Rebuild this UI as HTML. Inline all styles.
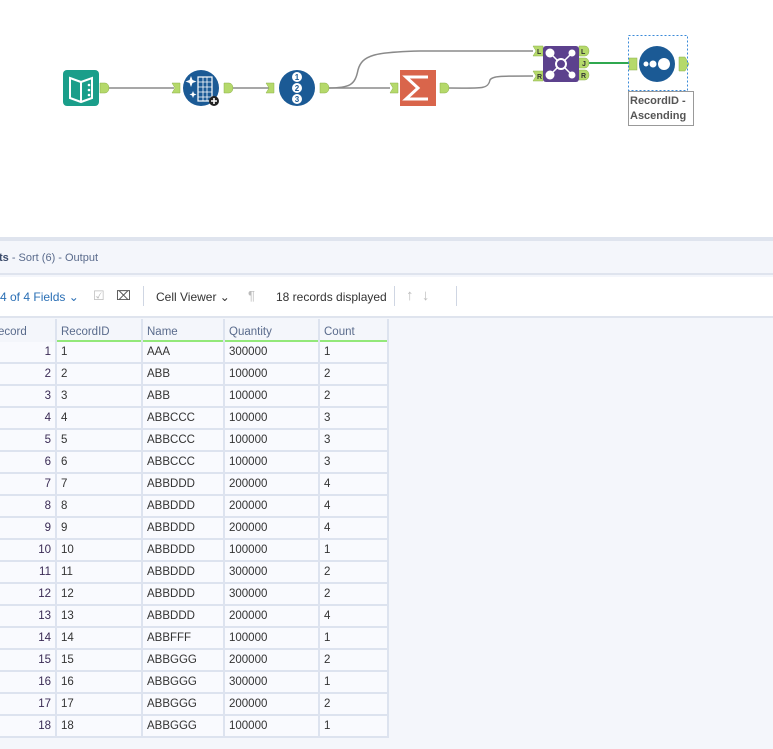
<!DOCTYPE html>
<html><head><meta charset="utf-8"><style>
*{margin:0;padding:0;box-sizing:border-box}
body{width:773px;height:749px;overflow:hidden;background:#f4f6fb;font-family:"Liberation Sans",sans-serif;position:relative}
#canvas{position:absolute;left:0;top:0;width:773px;height:237px;background:#fff}
#band{position:absolute;left:0;top:237px;width:773px;height:4px;background:#dfe4ee}
#hdr{position:absolute;left:0;top:241px;width:773px;height:34px;background:#f4f6fb;border-bottom:2px solid #dfe4ee;font-size:11px;color:#5a6b8c;line-height:34px}
#tb{position:absolute;left:0;top:277px;width:773px;height:41px;background:#fff;border-bottom:2px solid #dfe4ee;font-size:12px;color:#333}
#tb span{position:absolute;top:13px;white-space:nowrap}
.sep{position:absolute;top:9px;width:1px;height:20px;background:#cfd6e3}
table{position:absolute;left:-2px;top:319px;border-collapse:separate;border-spacing:0;table-layout:fixed;font-size:11.5px}
td{height:22px;border-right:2px solid #dde3ef;border-bottom:2px solid #dde3ef;background:#f9fafe;padding-left:4px;color:#333;white-space:nowrap;overflow:hidden}
tr.h td{color:#5a6b8c;background:#f4f6fb;border-bottom:none;height:21px;padding-top:4px}
tr.g td{height:2px;padding:0;border-bottom:none;background:#f4f6fb}
tr.g td.gg{background:#93e87a;border-bottom:none}
td.r{text-align:right;padding-right:4px;padding-left:0;color:#3a2b55}
tr.h td.r{text-align:left;padding-left:0}
</style></head><body>
<div id="canvas">
<svg width="773" height="237" xmlns="http://www.w3.org/2000/svg">
<g fill="none" stroke="#8a8a8a" stroke-width="1.5">
<line x1="108" y1="88" x2="174" y2="88"/>
<line x1="232" y1="88" x2="270" y2="88"/>
<line x1="328" y1="88" x2="390" y2="88"/>
<path d="M328 88 C350 88 355 85 358 70 C362 55 375 52 420 51 L533 51"/>
<path d="M448 88 C480 88 488 90 490 80 C492 76 500 76 533 76"/>
</g>
<line x1="589" y1="63" x2="629" y2="63" stroke="#2fa84f" stroke-width="2"/>
<g fill="#b5d96b" stroke="#8cb04a" stroke-width="0.5">
<path d="M100 83h5a4 5 0 0 1 0 10h-5z"/>
<path d="M172 83h8v10h-8l3-5z"/>
<path d="M224 83h5a4 5 0 0 1 0 10h-5z"/>
<path d="M266 83h8v10h-8l3-5z"/>
<path d="M320 83h5a4 5 0 0 1 0 10h-5z"/>
<path d="M390 83h8v10h-8l3-5z"/>
<path d="M440 83h5a4 5 0 0 1 0 10h-5z"/>
<path d="M533 46h10v10h-10l3-5z"/>
<path d="M533 71h10v10h-10l3-5z"/>
<path d="M579 46h6a4 5 0 0 1 0 10h-6z"/>
<path d="M579 58h6a4 5 0 0 1 0 10h-6z"/>
<path d="M579 70h6a4 5 0 0 1 0 10h-6z"/>
<rect x="629" y="58" width="8" height="12"/>
<path d="M679 57h6l4 7-4 7h-6z"/>
</g>
<g font-size="7" font-weight="bold" fill="#333" font-family="Liberation Sans">
<text x="537" y="54">L</text><text x="537" y="79">R</text>
<text x="581" y="54">L</text><text x="582" y="66">J</text><text x="581" y="78">R</text>
</g>
<rect x="63" y="70" width="36" height="36" rx="4" fill="#1a9e8a"/>
<path d="M70 78 L81 82 L92 78 V98 L81 102 L70 98Z" fill="none" stroke="#fff" stroke-width="2"/>
<line x1="81" y1="82" x2="81" y2="101" stroke="#fff" stroke-width="2"/>
<circle cx="89" cy="85" r="1.3" fill="#fff"/><circle cx="89" cy="90" r="1.3" fill="#fff"/><circle cx="89" cy="95" r="1.3" fill="#fff"/>
<circle cx="201" cy="88" r="18" fill="#1b5a95"/>
<rect x="198" y="77" width="14" height="24" fill="none" stroke="#fff" stroke-width="1.2"/>
<path d="M198 82h14M198 87h14M198 92h14M198 97h14M203 77v24M207 77v24" stroke="#fff" stroke-width="0.8"/>
<path d="M191 76l1.5 4 4 1.5-4 1.5-1.5 4-1.5-4-4-1.5 4-1.5z" fill="#fff"/>
<path d="M193 91l1 2.5 2.5 1-2.5 1-1 2.5-1-2.5-2.5-1 2.5-1z" fill="#fff"/>
<circle cx="214" cy="101" r="5" fill="#222"/><path d="M214 98v6M211 101h6" stroke="#fff" stroke-width="1.6"/>
<circle cx="297" cy="88" r="18" fill="#1b5a95"/>
<g fill="#fff"><circle cx="297" cy="77" r="5"/><circle cx="297" cy="88" r="5"/><circle cx="297" cy="99" r="5"/></g>
<g fill="#1b5a95" font-size="8" font-weight="bold" text-anchor="middle" font-family="Liberation Sans"><text x="297" y="80">1</text><text x="297" y="91">2</text><text x="297" y="102">3</text></g>
<rect x="400" y="70" width="36" height="36" fill="#d9654b"/>
<path d="M428 77H406l12 11-12 11h22" fill="none" stroke="#fff" stroke-width="3"/>
<rect x="543" y="46" width="36" height="36" rx="3" fill="#5c418d"/>
<g stroke="#fff" stroke-width="1.5"><line x1="561" y1="64" x2="550" y2="53"/><line x1="561" y1="64" x2="572" y2="53"/><line x1="561" y1="64" x2="550" y2="75"/><line x1="561" y1="64" x2="572" y2="75"/></g>
<circle cx="561" cy="64" r="5" fill="#5c418d" stroke="#fff" stroke-width="2"/>
<g fill="#fff"><circle cx="550" cy="53" r="4.5"/><circle cx="572" cy="53" r="3.5"/><circle cx="550" cy="75" r="4.5"/><circle cx="572" cy="75" r="3.5"/></g>
<rect x="628.5" y="35.5" width="59" height="55" fill="none" stroke="#3a8ad8" stroke-dasharray="2,2"/>
<circle cx="657" cy="64" r="18" fill="#1b5a95"/>
<circle cx="646" cy="64" r="2.5" fill="#fff"/><circle cx="653" cy="64" r="3.5" fill="#fff"/><circle cx="664" cy="64" r="6" fill="#fff"/>
<rect x="628.5" y="91.5" width="65" height="34" fill="#fff" stroke="#999"/>
<g font-size="11" font-weight="bold" fill="#555" font-family="Liberation Sans"><text x="630" y="104">RecordID -</text><text x="630" y="119">Ascending</text></g>
</svg>
</div>
<div id="band"></div>
<div id="hdr"><span style="font-weight:bold;color:#3a4a6a;margin-left:-1px">ts</span> - Sort (6) - Output</div>
<div id="tb">
<span style="left:0;color:#2a6fb5">4 of 4 Fields &#8964;</span>
<span style="left:93px;color:#bbb;font-size:13px;top:11px">&#9745;</span>
<span style="left:116px;color:#555;font-size:13px;top:11px">&#8999;</span>
<div class="sep" style="left:143px"></div>
<span style="left:156px">Cell Viewer &#8964;</span>
<span style="left:248px;color:#bbb;font-size:13px;top:11px">&#182;</span>
<span style="left:276px">18 records displayed</span>
<div class="sep" style="left:394px"></div>
<span style="left:406px;color:#bbb;font-size:15px;top:10px">&#8593;&nbsp; &#8595;</span>
<div class="sep" style="left:456px"></div>
</div>
<table>
<colgroup><col style="width:59px"><col style="width:86px"><col style="width:82px"><col style="width:95px"><col style="width:69px"></colgroup>
<tr class="h"><td class="r">ecord</td><td>RecordID</td><td>Name</td><td>Quantity</td><td>Count</td></tr>
<tr class="g"><td></td><td class="gg"></td><td class="gg"></td><td class="gg"></td><td class="gg"></td></tr>
<tr><td class="r">1</td><td>1</td><td>AAA</td><td>300000</td><td>1</td></tr>
<tr><td class="r">2</td><td>2</td><td>ABB</td><td>100000</td><td>2</td></tr>
<tr><td class="r">3</td><td>3</td><td>ABB</td><td>100000</td><td>2</td></tr>
<tr><td class="r">4</td><td>4</td><td>ABBCCC</td><td>100000</td><td>3</td></tr>
<tr><td class="r">5</td><td>5</td><td>ABBCCC</td><td>100000</td><td>3</td></tr>
<tr><td class="r">6</td><td>6</td><td>ABBCCC</td><td>100000</td><td>3</td></tr>
<tr><td class="r">7</td><td>7</td><td>ABBDDD</td><td>200000</td><td>4</td></tr>
<tr><td class="r">8</td><td>8</td><td>ABBDDD</td><td>200000</td><td>4</td></tr>
<tr><td class="r">9</td><td>9</td><td>ABBDDD</td><td>200000</td><td>4</td></tr>
<tr><td class="r">10</td><td>10</td><td>ABBDDD</td><td>100000</td><td>1</td></tr>
<tr><td class="r">11</td><td>11</td><td>ABBDDD</td><td>300000</td><td>2</td></tr>
<tr><td class="r">12</td><td>12</td><td>ABBDDD</td><td>300000</td><td>2</td></tr>
<tr><td class="r">13</td><td>13</td><td>ABBDDD</td><td>200000</td><td>4</td></tr>
<tr><td class="r">14</td><td>14</td><td>ABBFFF</td><td>100000</td><td>1</td></tr>
<tr><td class="r">15</td><td>15</td><td>ABBGGG</td><td>200000</td><td>2</td></tr>
<tr><td class="r">16</td><td>16</td><td>ABBGGG</td><td>300000</td><td>1</td></tr>
<tr><td class="r">17</td><td>17</td><td>ABBGGG</td><td>200000</td><td>2</td></tr>
<tr><td class="r">18</td><td>18</td><td>ABBGGG</td><td>100000</td><td>1</td></tr>
</table>
</body></html>
